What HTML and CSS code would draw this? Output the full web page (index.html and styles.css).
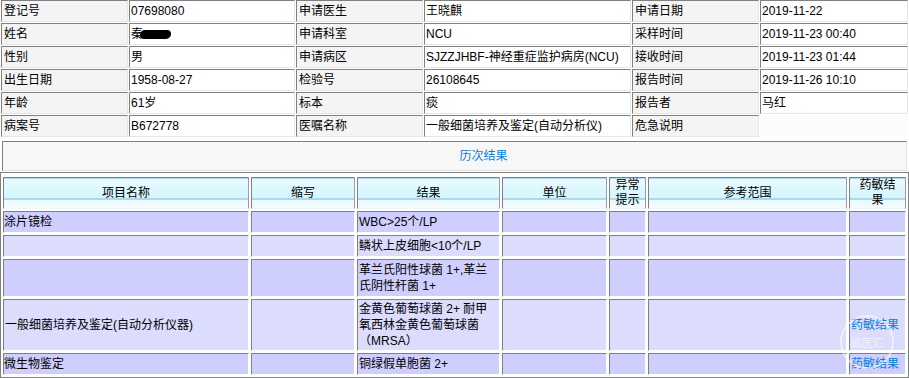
FILE: index.html
```html
<!DOCTYPE html>
<html lang="zh-CN">
<head>
<meta charset="utf-8">
<title>检验报告</title>
<link rel="stylesheet" href="styles.css">
</head>
<body>
<table class="info">
  <colgroup>
    <col class="i1"><col class="i2"><col class="i3"><col class="i4"><col class="i5"><col class="i6">
  </colgroup>
  <tr><td class="lbl">登记号</td><td class="val">07698080</td><td class="lbl">申请医生</td><td class="val">王晓麒</td><td class="lbl">申请日期</td><td class="val">2019-11-22</td></tr>
  <tr><td class="lbl">姓名</td><td class="val">秦<span class="blot"></span></td><td class="lbl">申请科室</td><td class="val">NCU</td><td class="lbl">采样时间</td><td class="val">2019-11-23 00:40</td></tr>
  <tr><td class="lbl">性别</td><td class="val">男</td><td class="lbl">申请病区</td><td class="val">SJZZJHBF-神经重症监护病房(NCU)</td><td class="lbl">接收时间</td><td class="val">2019-11-23 01:44</td></tr>
  <tr><td class="lbl">出生日期</td><td class="val">1958-08-27</td><td class="lbl">检验号</td><td class="val">26108645</td><td class="lbl">报告时间</td><td class="val">2019-11-26 10:10</td></tr>
  <tr><td class="lbl">年龄</td><td class="val">61岁</td><td class="lbl">标本</td><td class="val">痰</td><td class="lbl">报告者</td><td class="val">马红</td></tr>
  <tr><td class="lbl">病案号</td><td class="val">B672778</td><td class="lbl">医嘱名称</td><td class="val">一般细菌培养及鉴定(自动分析仪)</td><td class="lbl">危急说明</td><td class="blank"></td></tr>
</table>

<div class="history"><a class="link" href="#">历次结果</a></div>

<div class="results-wrap">
<table class="results">
  <colgroup>
    <col class="c1"><col class="c2"><col class="c3"><col class="c4"><col class="c5"><col class="c6"><col class="c7">
  </colgroup>
  <tr>
    <th>项目名称</th><th>缩写</th><th>结果</th><th>单位</th><th>异常<br>提示</th><th>参考范围</th><th>药敏结<br>果</th>
  </tr>
  <tr class="dark">
    <td>涂片镜检</td><td></td><td>WBC&gt;25个/LP</td><td></td><td></td><td></td><td></td>
  </tr>
  <tr class="light">
    <td></td><td></td><td>鳞状上皮细胞&lt;10个/LP</td><td></td><td></td><td></td><td></td>
  </tr>
  <tr class="dark">
    <td></td><td></td><td>革兰氏阳性球菌 1+,革兰<br>氏阴性杆菌 1+</td><td></td><td></td><td></td><td></td>
  </tr>
  <tr class="light tall">
    <td>一般细菌培养及鉴定(自动分析仪器)</td><td></td><td>金黄色葡萄球菌 2+ 耐甲<br>氧西林金黄色葡萄球菌<br>（MRSA）</td><td></td><td></td><td></td><td><a class="link" href="#">药敏结果</a></td>
  </tr>
  <tr class="dark">
    <td>微生物鉴定</td><td></td><td>铜绿假单胞菌 2+</td><td></td><td></td><td></td><td><a class="link" href="#">药敏结果</a></td>
  </tr>
</table>
<div class="watermark"><span>脑医汇</span></div>
</div>
</body>
</html>
```

FILE: styles.css
```css
html, body {
  margin: 0;
  padding: 0;
  background: #ffffff;
}

body {
  font-family: "Liberation Sans", "Noto Sans CJK SC", sans-serif;
  font-size: 12px;
  color: #000;
  width: 909px;
  overflow: hidden;
}

table {
  font-size: 12px;
  table-layout: fixed;
  width: 909px;
}

/* ---------- info table ---------- */
.info {
  border-collapse: separate;
  border-spacing: 1px;
  margin-top: -1px;
}

.info col.i1 { width: 127px; }
.info col.i2 { width: 166px; }
.info col.i3 { width: 127px; }
.info col.i4 { width: 207px; }
.info col.i5 { width: 127px; }
.info col.i6 { width: 148px; }

.info td {
  border: 1px solid;
  border-color: #808080 #e6e6e6 #e6e6e6 #808080;
  padding: 3px 1px 3px 1px;
  line-height: 14px;
  white-space: nowrap;
  overflow: hidden;
  vertical-align: middle;
}

.info td.lbl {
  background: #f4f4f4;
  padding-left: 2px;
}

.info td.val {
  background: #ffffff;
}

.info td.blank {
  border-color: transparent;
  background: #fcfcfc;
}

.blot {
  display: inline-block;
  width: 31px;
  height: 9px;
  background: #000;
  border-radius: 5px 4px 5px 4px;
  vertical-align: -1px;
  margin-left: -3px;
}

/* ---------- history box ---------- */
.history {
  margin: 3px 2px 1px 2px;
  height: 28px;
  line-height: 28px;
  background: #f7f7f7;
  border: 1px solid;
  border-color: #808080 #e2e2e2 #e2e2e2 #808080;
  text-align: center;
  padding-left: 58px;
}

.link {
  color: #0a7fd6;
  text-decoration: none;
}

/* ---------- results table ---------- */
.results-wrap {
  position: relative;
}

.results {
  border-collapse: separate;
  border-spacing: 2px;
  border: 1px solid #808080;
  padding-top: 2px;
}

.results col.c1 { width: 246px; }
.results col.c2 { width: 104px; }
.results col.c3 { width: 143px; }
.results col.c4 { width: 105px; }
.results col.c5 { width: 37px; }
.results col.c6 { width: 199px; }
.results col.c7 { width: 57px; }

.results th {
  font-weight: normal;
  text-align: center;
  vertical-align: middle;
  line-height: 15px;
  height: 30px;
  padding: 0;
  border: 1px solid;
  border-color: #808080 #9c9c9c #eef9fc #808080;
  background: linear-gradient(to bottom,
    #a9dcf0 0, #a9dcf0 1px,
    #e8f8fd 1px, #e8f8fd 8px,
    #ddf8ff 8px, #d6f6ff 20px,
    #a8d9ee 20px, #a8d9ee 22px,
    #edf9fc 22px, #f2fbfd 30px);
}

.results td {
  border: 1px solid;
  border-color: #808080 #ffffff #ffffff #808080;
  padding: 2px 1px;
  line-height: 16px;
  vertical-align: middle;
  white-space: nowrap;
  overflow: visible;
}

.results tr.tall td {
  padding: 1px 1px;
}

.results td:first-child {
  padding-left: 0;
}

.results tr.dark td {
  background: #cfcfff;
}

.results tr.light td {
  background: #dcdcfd;
}

/* watermark overlay */
.watermark {
  position: absolute;
  left: 840px;
  top: 143px;
  width: 50px;
  height: 50px;
  border: 2px solid rgba(255, 255, 255, 0.55);
  border-radius: 50%;
  display: flex;
  align-items: center;
  justify-content: center;
  color: rgba(255, 255, 255, 0.6);
  font-size: 11px;
  pointer-events: none;
}
```
